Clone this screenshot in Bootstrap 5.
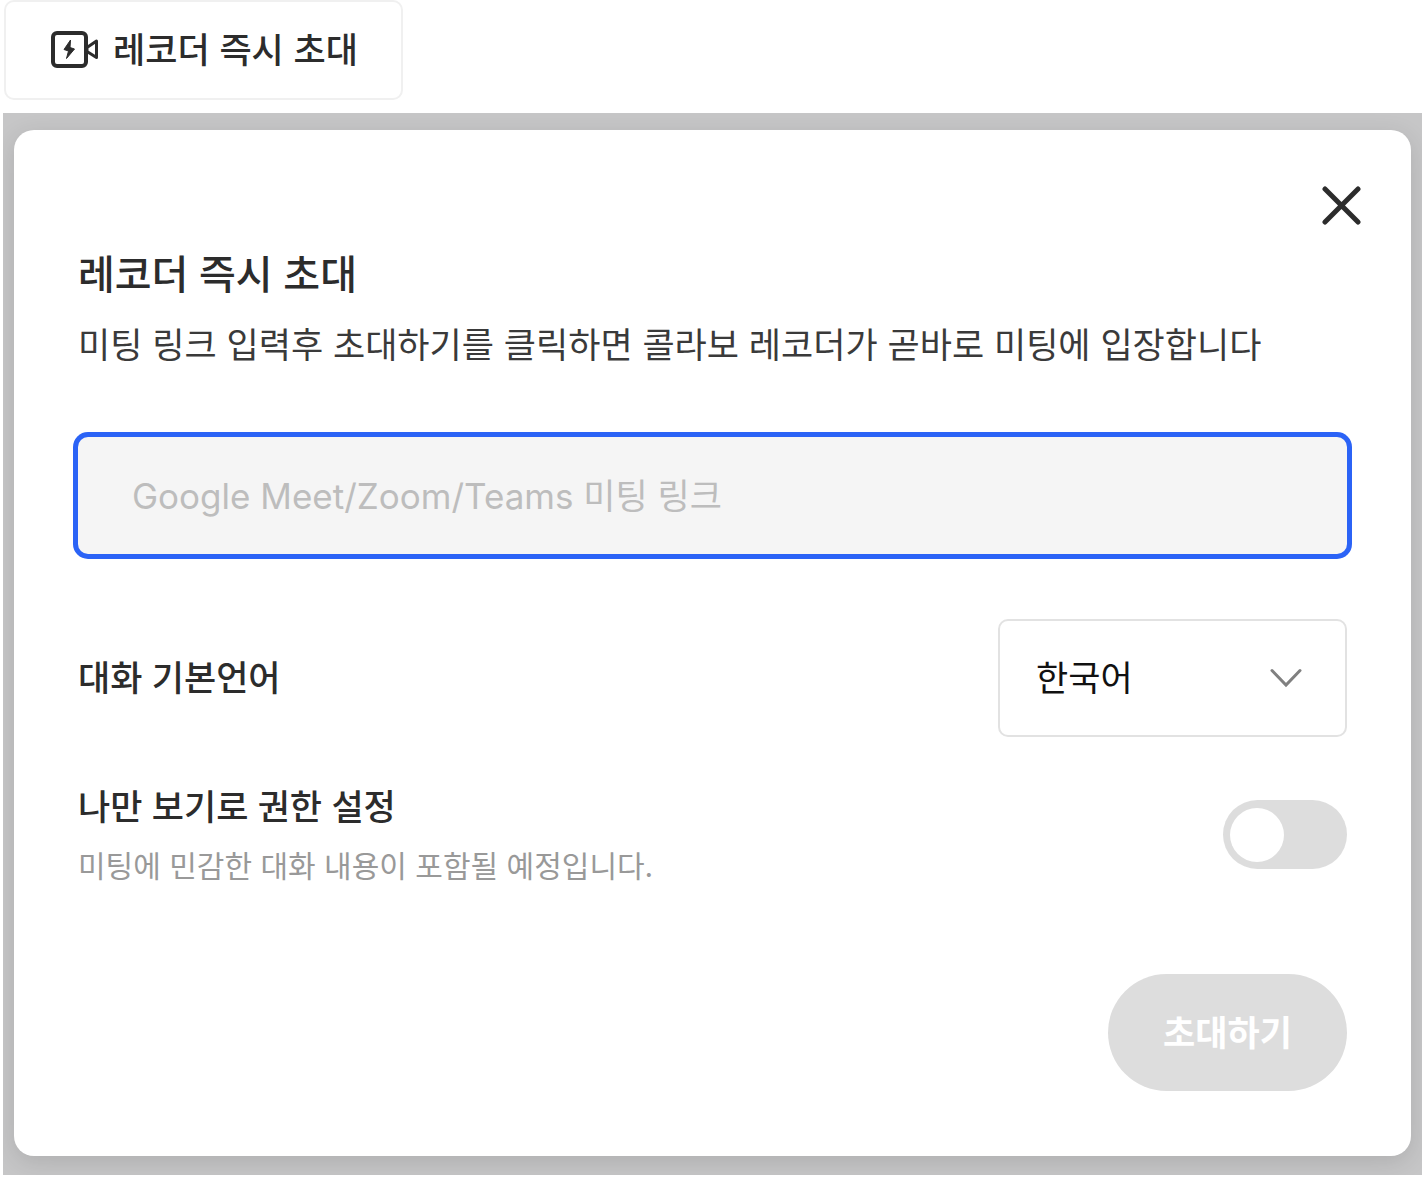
<!DOCTYPE html>
<html lang="ko">
<head>
<meta charset="utf-8">
<meta name="viewport" content="width=device-width, initial-scale=1">
<title>레코더 즉시 초대</title>
<link href="https://cdn.jsdelivr.net/npm/bootstrap@5.3.0/dist/css/bootstrap.min.css" rel="stylesheet">
<style>
  body {
    font-family: Inter, "Noto Sans CJK KR", sans-serif;
    font-size: 35px;
    line-height: 52px;
    color: #3a3a3a;
    background: #fff;
    padding: 0 2px 3px 3px;
  }
  .launch-btn {
    font-family: "Noto Sans CJK KR", sans-serif;
    font-size: 35px;
    line-height: 52px;
    font-weight: 500;
    color: #2c2c2c;
    padding: 20px 43px 20px 45px;
    margin-left: 1px;
    border: 2px solid #f0f0f0;
    border-radius: 10px;
    gap: 14px;
  }
  .backdrop-area {
    background: #c6c6c7;
    margin-top: 13px;
    padding: 17px 11px 19px;
    overflow: hidden;
  }
  .invite-dialog {
    border-radius: 20px;
    padding: 56px 64px 65px;
    box-shadow: 0 6px 24px rgba(0, 0, 0, .12);
  }
  .close-btn { margin-right: -14px; line-height: 0; }
  .dialog-title { font-size: 40px; line-height: 56px; font-weight: 500; color: #2c2c2c; margin: 22px 0 16px; }
  .dialog-lead { margin-bottom: 66px; }
  .link-input, .link-input:focus {
    height: 117px;
    padding: 0 54px;
    font-size: 35px;
    border: 0;
    border-radius: 10px;
    background: #f5f5f5;
    box-shadow: 0 0 0 5px #2b63f6;
  }
  .link-input::placeholder { color: #bdbdbd; }
  .language-row { margin-top: 65px; }
  .setting-label { font-weight: 500; color: #2c2c2c; }
  .language-select {
    --bs-form-select-bg-img: url("data:image/svg+xml,%3Csvg xmlns='http://www.w3.org/2000/svg' viewBox='0 0 32 20'%3E%3Cpath d='M2 2.5 16 17 30 2.5' fill='none' stroke='%23808080' stroke-width='3' stroke-linecap='round'/%3E%3C/svg%3E");
    width: 349px;
    height: 118px;
    padding: 0 80px 0 36px;
    font-size: 35px;
    color: #111;
    border: 2px solid #e2e2e2;
    border-radius: 10px;
    background-position: right 43px center;
    background-size: 32px 20px;
  }
  .privacy-row { margin-top: 44px; }
  .setting-note { font-size: 30px; line-height: 44px; color: #999; margin-top: 11px; }
  .form-switch .privacy-switch, .form-switch .privacy-switch:focus {
    --bs-form-switch-bg: url("data:image/svg+xml,%3Csvg xmlns='http://www.w3.org/2000/svg' viewBox='0 0 54 54'%3E%3Ccircle cx='27' cy='27' r='27' fill='%23fff'/%3E%3C/svg%3E");
    width: 124px;
    height: 69px;
    border: 0;
    border-radius: 35px;
    background-color: #ddd;
    background-size: 54px 54px;
    background-position: left 7px center;
    box-shadow: none;
  }
  .form-switch .privacy-switch:checked { background-color: #2b63f6; background-position: right 7px center; }
  .submit-row { margin-top: 86px; }
  .invite-btn, .invite-btn:disabled {
    font-size: 35px;
    line-height: 52px;
    font-weight: 700;
    width: 239px;
    height: 117px;
    color: #fff;
    background: #ddd;
    border: 0;
    opacity: 1;
  }
</style>
</head>
<body>
<button type="button" class="btn launch-btn d-inline-flex align-items-center">
  <svg width="48" height="38" viewBox="0 0 48 38" fill="none" stroke="#2c2c2c" aria-hidden="true">
    <rect x="2" y="2" width="33" height="33" rx="4" stroke-width="4"/>
    <path d="M36 16.500 45.500 10V26.500L36 20.500Z" stroke-width="3" stroke-linejoin="round"/>
    <path d="M19.500 9 13 18.500 17.500 20 15.500 27.500 23.500 18 19 16.500Z" fill="#2c2c2c" stroke-width="1" stroke-linejoin="round"/>
  </svg>
  <span class="pb-1">레코더 즉시 초대</span>
</button>

<main class="backdrop-area">
  <form class="invite-dialog bg-white" role="dialog" aria-labelledby="inviteTitle">
    <div class="d-flex justify-content-end">
      <button type="button" class="btn close-btn border-0 p-0" aria-label="닫기">
        <svg width="39" height="39" viewBox="0 0 39 39" fill="none" stroke="#2c2c2c" stroke-width="5" stroke-linecap="round" aria-hidden="true"><path d="M3 3 36 36M36 3 3 36"/></svg>
      </button>
    </div>
    <h1 class="dialog-title" id="inviteTitle">레코더 즉시 초대</h1>
    <p class="dialog-lead">미팅 링크 입력후 초대하기를 클릭하면 콜라보 레코더가 곧바로 미팅에 입장합니다</p>
    <input type="url" class="form-control link-input" aria-label="미팅 링크" placeholder="Google Meet/Zoom/Teams 미팅 링크">

    <div class="language-row d-flex justify-content-between align-items-center">
      <label class="setting-label" for="language">대화 기본언어</label>
      <select class="form-select language-select" id="language">
        <option selected>한국어</option>
      </select>
    </div>

    <div class="privacy-row d-flex justify-content-between align-items-center">
      <div>
        <label class="setting-label d-block" for="onlyMe">나만 보기로 권한 설정</label>
        <p class="setting-note mb-0" id="onlyMeNote">미팅에 민감한 대화 내용이 포함될 예정입니다.</p>
      </div>
      <div class="form-check form-switch d-flex p-0 m-0">
        <input class="form-check-input privacy-switch m-0" type="checkbox" role="switch" id="onlyMe" aria-describedby="onlyMeNote">
      </div>
    </div>

    <div class="submit-row d-flex justify-content-end">
      <button type="submit" class="btn invite-btn rounded-pill p-0" disabled>초대하기</button>
    </div>
  </form>
</main>
<script src="https://cdn.jsdelivr.net/npm/bootstrap@5.3.0/dist/js/bootstrap.bundle.min.js"></script>
</body>
</html>
